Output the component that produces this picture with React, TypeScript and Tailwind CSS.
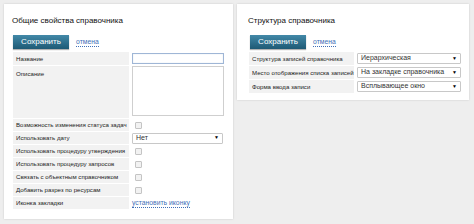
import React from 'react';

const font = { fontFamily: '"Liberation Sans", Arial, sans-serif' };

function Button() {
  return (
    <div className="flex items-center gap-[7px]">
      <button className="w-[56px] h-[14px] bg-gradient-to-b from-[#4289a8] to-[#1e5a75] text-white text-[8px] leading-[14px] shadow-[0_1px_1px_rgba(0,0,0,0.3)]">
        Сохранить
      </button>
      <a className="text-[6.8px] text-[#3f6fb8] border-b border-dotted border-[#3f6fb8] leading-[8px]">отмена</a>
    </div>
  );
}

function Select({ value, w }: { value: string; w: string }) {
  return (
    <div className={`${w} h-[11px] border border-[#c8c8c8] rounded-[1px] bg-white flex items-center justify-between pl-[3px] pr-[3px] text-[7px] text-[#333]`}>
      <span>{value}</span>
      <span className="text-[5px] text-black">▼</span>
    </div>
  );
}

function Check() {
  return <div className="w-[7px] h-[7px] border border-[#c4c4c4] bg-[#f2f2f2] rounded-[1px] ml-[3px]" />;
}

function Row({ label, h = 'h-[12px]', lw = 'w-[116px]', children, top = false }: { label: string; h?: string; lw?: string; children?: React.ReactNode; top?: boolean }) {
  return (
    <div className={`flex ${h} mb-[1px]`}>
      <div className={`${lw} bg-[#f2f2f2] pl-[3px] text-[6.1px] text-[#222] flex ${top ? 'items-start pt-[3px]' : 'items-center'} whitespace-nowrap overflow-hidden`}>
        {label}
      </div>
      <div className={`flex-1 pl-[3px] flex ${top ? 'items-start pt-[0px]' : 'items-center'}`}>{children}</div>
    </div>
  );
}

export default function App() {
  return (
    <div className="w-[474px] h-[224px] bg-[#eeeeee] flex items-start gap-[4px] pt-[4px] pl-[4px]" style={font}>
      {/* Общие свойства */}
      <section className="w-[229px] h-[215px] bg-white shadow-[0_0_2px_rgba(0,0,0,0.15)] pl-[9px] pr-[8px]">
        <h2 className="text-[8px] text-[#111] mt-[11px] h-[20px] -ml-[1px]">Общие свойства справочника</h2>
        <Button />
        <div className="mt-[3px]">
          <Row label="Название" h="h-[13px]">
            <div className="w-[92px] h-[11px] border border-[#9fb6d6] bg-white shadow-[inset_0_0_1px_#bcd]" />
          </Row>
          <Row label="Описание" h="h-[52px]" top>
            <div className="w-[92px] h-[50px] border border-[#cfcfcf] bg-white" />
          </Row>
          <Row label="Возможность изменения статуса задач"><Check /></Row>
          <Row label="Использовать дату"><Select value="Нет" w="w-[91px]" /></Row>
          <Row label="Использовать процедуру утверждения"><Check /></Row>
          <Row label="Использовать процедуру запросов"><Check /></Row>
          <Row label="Связать с объектным справочником"><Check /></Row>
          <Row label="Добавить разрез по ресурсам"><Check /></Row>
          <Row label="Иконка закладки">
            <a className="text-[6.8px] text-[#3f6fb8] border-b border-dotted border-[#3f6fb8] leading-[8px]">установить иконку</a>
          </Row>
        </div>
      </section>

      {/* Структура */}
      <section className="w-[232px] h-[96px] bg-white shadow-[0_0_2px_rgba(0,0,0,0.15)] pl-[12px] pr-[8px]">
        <h2 className="text-[8px] text-[#111] mt-[11px] h-[20px] -ml-[1px]">Структура справочника</h2>
        <div className="pl-[1px]"><Button /></div>
        <div className="mt-[3px]">
          <Row label="Структура записей справочника" h="h-[13px]" lw="w-[107px]"><Select value="Иерархическая" w="w-[104px]" /></Row>
          <Row label="Место отображения списка записей" h="h-[13px]" lw="w-[107px]"><Select value="На закладке справочника" w="w-[104px]" /></Row>
          <Row label="Форма ввода записи" h="h-[13px]" lw="w-[107px]"><Select value="Всплывающее окно" w="w-[104px]" /></Row>
        </div>
      </section>
    </div>
  );
}
